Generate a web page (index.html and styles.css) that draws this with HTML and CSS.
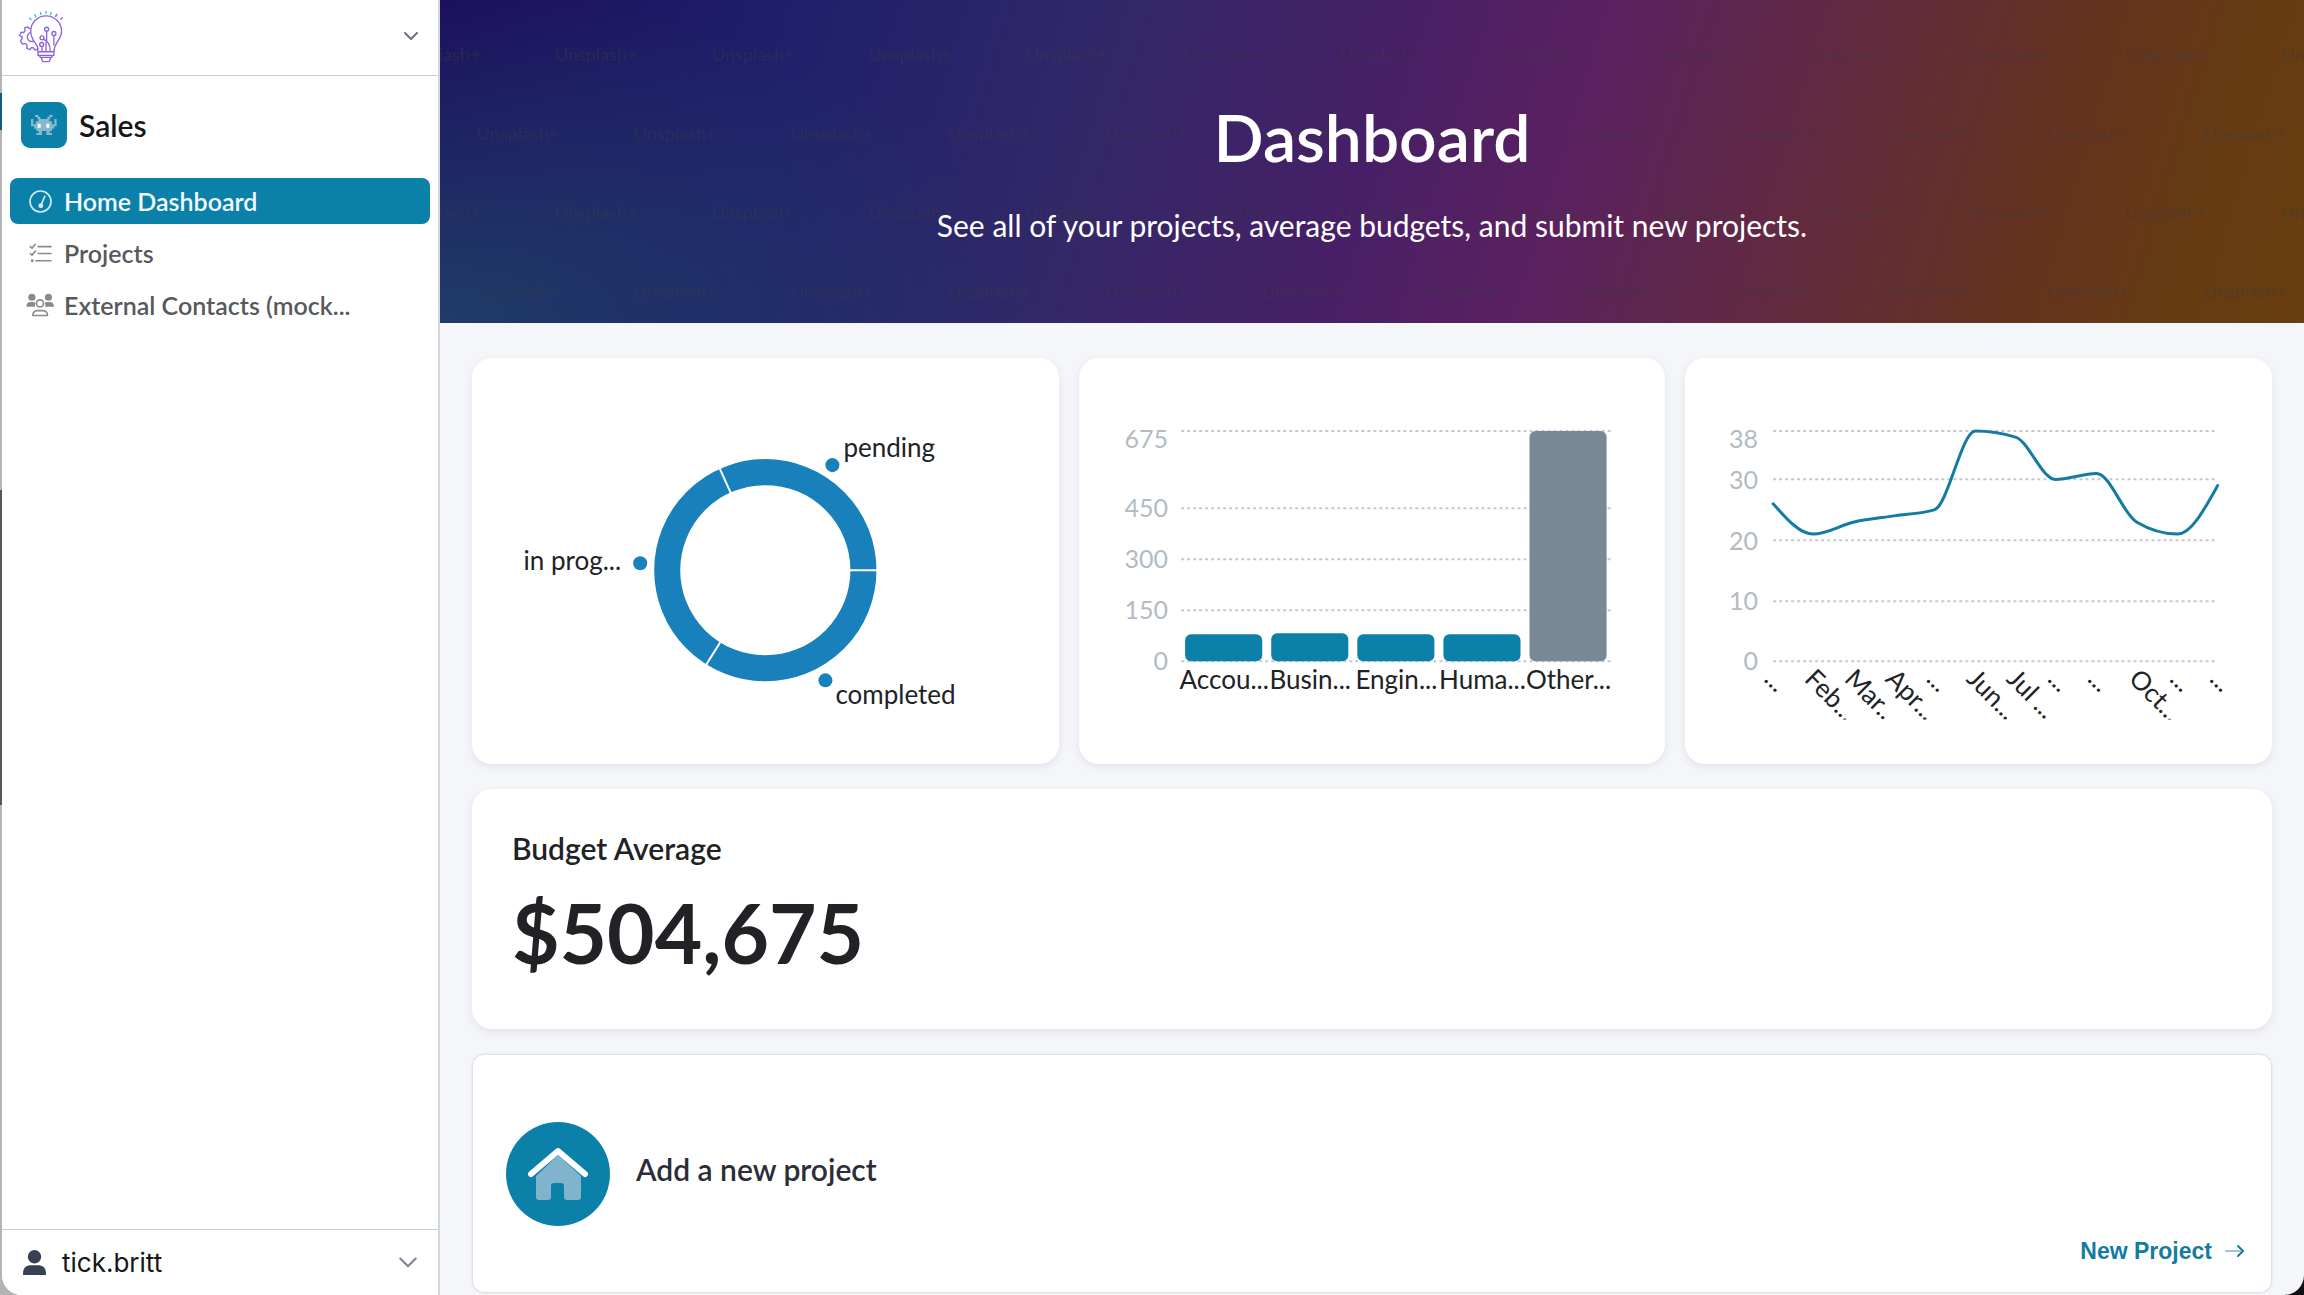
FILE: index.html
```html
<!DOCTYPE html>
<html lang="en">
<head>
<meta charset="utf-8">
<title>Sales – Dashboard</title>
<link rel="stylesheet" href="styles.css">
</head>
<body>
<div class="app">
  <aside class="sidebar">
    <button class="workspace" aria-label="Switch workspace">
      <svg class="logo" viewBox="54 28 138 160" fill="none" stroke="#8a63d8" stroke-width="4" stroke-linecap="round" stroke-linejoin="round">
        <g stroke="#35b8cf"><path d="M89 52l4 5M104 42l3 6M121 36l2 6M138 32v6M154 36l-2 6"/></g>
        <path d="M171 41l-4 6M187 51l-4 5"/>
        <path d="M113 153v-13c-3-10-21-22-21-48a46 46 0 0 1 93 0c0 26-21 32-23 61"/>
        <circle cx="140" cy="86" r="6"/><circle cx="162" cy="99" r="6"/><circle cx="126" cy="112" r="6"/><circle cx="125" cy="132" r="6"/>
        <path d="M140 93v28M162 106v28M131 116c12 8 20 14 20 36M126 139v14M138 126v26"/>
        <path d="M114 154h48v11h-48zM118 166l3 5h34l3-5M124 172l3 9q1 3 4 3h14q3 0 4-3l3-9"/>
        <path d="M91 84l-5-1-3-4-9 2 1 9-4 6-8-1-5 10 8 4v6l-5 6 6 10 9-2 5 5-1 9 9 5 5-6h6l5 7 9-4M90 96c-7 4-9 10-8 16 2 8 9 12 17 11"/>
      </svg>
      <svg class="chevron" viewBox="0 0 14 9" fill="none" stroke="#6b7280" stroke-width="2" stroke-linecap="round" stroke-linejoin="round"><path d="M1 1l6 6 6-6"/></svg>
    </button>

    <div class="space">
      <span class="space-icon">
        <svg viewBox="93 340 78 62" fill="#86b9d0">
          <path d="M93 352h7v16h7v-9h8v-7h-3v-6h-7v-6h10v5h6v7h21v-7h6v-5h10v6h-7v6h-3v7h8v9h7v-16h7v22h-7v7h-7v7h-7v6h7v6h-17v-12h-13v12h-17v-6h7v-6h-7v-7h-7v-7h-9z"/>
          <path fill="#fff" d="M113 366h9v12h-9zM139 366h9v12h-9z"/>
        </svg>
      </span>
      <h2 class="space-name">Sales</h2>
    </div>

    <nav class="nav">
      <a class="nav-item nav-item-active" href="#home">
        <svg class="icon-gauge" viewBox="84 573 70 70" fill="none" stroke="#cdeaf6" stroke-width="5" stroke-linecap="round"><circle cx="119" cy="608" r="32"/><path d="M121 618l11-26"/><circle cx="120" cy="621" r="5" fill="#cdeaf6"/></svg>
        <span>Home Dashboard</span>
      </a>
      <a class="nav-item" href="#projects">
        <svg class="icon-list" viewBox="84 730 70 60" fill="none" stroke="#8a8a8e" stroke-width="5" stroke-linecap="round" stroke-linejoin="round"><path d="M88 741l5 5 10-12M88 762l5 5 10-12M112 741h39M112 762h39M105 784h46"/><circle cx="94" cy="784" r="2"/></svg>
        <span>Projects</span>
      </a>
      <a class="nav-item" href="#contacts">
        <svg class="icon-users" viewBox="77 886 86 72" fill="#8a8a8e"><circle cx="95" cy="899" r="11"/><circle cx="146" cy="899" r="11"/><path d="M78 928c0-8 5-14 12-14h10q4 0 6 2-3 6-1 12zM163 928c0-8-5-14-12-14h-10q-4 0-6 2 3 6 1 12z"/><g fill="none" stroke="#8a8a8e" stroke-width="5" stroke-linejoin="round"><circle cx="120" cy="918" r="11"/><path d="M98 955c0-9 6-15 14-15h17c8 0 14 6 14 15z"/></g></svg>
        <span>External Contacts (mock...</span>
      </a>
    </nav>

    <button class="account">
      <svg class="icon-user" viewBox="0 0 24 27" fill="#384152"><circle cx="12" cy="7" r="7"/><path d="M0 25c0-6 3-9 8-9h8c5 0 8 3 8 9q0 2-2 2H2q-2 0-2-2z"/></svg>
      <span>tick.britt</span>
      <svg class="chevron chevron-large" viewBox="0 0 14 9" fill="none" stroke="#7d8591" stroke-width="1.6" stroke-linecap="round" stroke-linejoin="round"><path d="M1 1l6 6 6-6"/></svg>
    </button>
  </aside>

  <main class="main">
    <header class="hero">
      <svg class="watermark" aria-hidden="true">
        <defs>
          <pattern id="marks" width="157" height="158" patternUnits="userSpaceOnUse">
            <text x="-42" y="61">Unsplash+</text>
            <text x="115" y="61">Unsplash+</text>
            <text x="37" y="140">Unsplash+</text>
          </pattern>
        </defs>
        <rect width="100%" height="100%" fill="url(#marks)"/>
      </svg>
      <h1 class="hero-title">Dashboard</h1>
      <p class="hero-text">See all of your projects, average budgets, and submit new projects.</p>
    </header>

    <div class="content">
      <section class="charts">
        <article class="card">
          <svg class="chart" viewBox="0 0 586 406" role="img" aria-label="Projects by status">
            <circle cx="293" cy="212" r="98" fill="none" stroke="#1880ba" stroke-width="26"/>
            <g stroke="#fff" stroke-width="2"><path d="M376 212h36M248 284l-17 27M259 136l-14-31"/></g>
            <g fill="#1880ba"><circle cx="360" cy="107" r="7"/><circle cx="353" cy="322" r="7"/><circle cx="168" cy="205" r="7"/></g>
            <g class="label">
              <text x="371" y="99">pending</text>
              <text x="363" y="346">completed</text>
              <text x="149" y="212" text-anchor="end">in prog...</text>
            </g>
          </svg>
        </article>
        <article class="card">
          <svg class="chart" viewBox="0 0 586 406" role="img" aria-label="Projects by department">
            <path class="grid" d="M102 73h430M102 150h430M102 201h430M102 252h430M102 303h430"/>
            <g class="tick" text-anchor="end">
              <text x="89" y="90">675</text><text x="89" y="159">450</text><text x="89" y="210">300</text><text x="89" y="261">150</text><text x="89" y="312">0</text>
            </g>
            <g fill="#0b80a9">
              <rect x="106" y="276" width="77" height="27" rx="6"/><rect x="192" y="275" width="77" height="28" rx="6"/><rect x="278" y="276" width="77" height="27" rx="6"/><rect x="364" y="276" width="77" height="27" rx="6"/>
              <rect x="450" y="73" width="77" height="230" rx="6" fill="#788896"/>
            </g>
            <g class="label" text-anchor="middle">
              <text x="145" y="331">Accou...</text><text x="231" y="331">Busin...</text><text x="317" y="331">Engin...</text><text x="403" y="331">Huma...</text><text x="489" y="331">Other...</text>
            </g>
          </svg>
        </article>
        <article class="card">
          <svg class="chart" viewBox="0 0 586 406" role="img" aria-label="Projects by month">
            <defs><clipPath id="axis"><rect width="586" height="361"/></clipPath></defs>
            <path class="grid" d="M88 73h444M88 121h444M88 182h444M88 243h444M88 303h444"/>
            <g class="tick" text-anchor="end">
              <text x="73" y="90">38</text><text x="73" y="131">30</text><text x="73" y="192">20</text><text x="73" y="252">10</text><text x="73" y="312">0</text>
            </g>
            <path fill="none" stroke="#147ba1" stroke-width="3" stroke-linecap="round" d="M88 145.6C101.5 160.7 114.5 175.9 128 175.9S155.5 166.8 169 163.8S195.5 159.7 209 157.7S235.5 155.7 249 151.7S276.5 73 290 73S316.5 75 330 79S356.5 121.4 370 121.4S397.5 115.4 411 115.4S437.5 155.7 451 163.8S478.5 175.9 492 175.9S518.5 151.7 532 127.5"/>
            <g class="label" clip-path="url(#axis)">
              <text transform="translate(78 322) rotate(45)">...</text>
              <text transform="translate(118 322) rotate(45)">Feb...</text>
              <text transform="translate(158 322) rotate(45)">Mar...</text>
              <text transform="translate(199 322) rotate(45)">Apr...</text>
              <text transform="translate(240 322) rotate(45)">...</text>
              <text transform="translate(280 322) rotate(45)">Jun...</text>
              <text transform="translate(320 322) rotate(45)">Jul ...</text>
              <text transform="translate(361 322) rotate(45)">...</text>
              <text transform="translate(401 322) rotate(45)">...</text>
              <text transform="translate(442 322) rotate(45)">Oct...</text>
              <text transform="translate(483 322) rotate(45)">...</text>
              <text transform="translate(523 322) rotate(45)">...</text>
            </g>
          </svg>
        </article>
      </section>

      <section class="card budget">
        <h2 class="budget-title">Budget Average</h2>
        <p class="budget-value">$504,675</p>
      </section>

      <section class="card project">
        <div class="project-head">
          <svg class="project-icon" viewBox="0 0 104 104"><circle cx="52" cy="52" r="52" fill="#0b80a9"/><path fill="#80b4cc" d="M52 33l23 21v21q0 3-3 3H61q-3 0-3-3V64q0-3-3-3h-7q-3 0-3 3v11q0 3-3 3H33q-3 0-3-3V54z"/><path fill="none" stroke="#fff" stroke-width="6" stroke-linecap="round" stroke-linejoin="round" d="M25 52l27-23 27 23"/></svg>
          <h2 class="project-title">Add a new project</h2>
        </div>
        <a class="project-link" href="#new-project">New Project
          <svg viewBox="0 0 20 14" fill="none" stroke-width="2" stroke-linecap="round" stroke-linejoin="round"><path stroke="#9cc5d6" d="M1 7h14"/><path stroke="#147ba1" d="M13 2l5 5-5 5"/></svg>
        </a>
      </section>
    </div>
  </main>
</div>
</body>
</html>
```
FILE: styles.css
```css
* {
  box-sizing: border-box;
}

body,
h1,
h2,
p {
  margin: 0;
}

body {
  font-family: Lato, "Open Sans", sans-serif;
  color: #212225;
  background:
    linear-gradient(#0f5f7c, #0f5f7c) 0 93px / 2px 37px no-repeat,
    linear-gradient(#55555c, #55555c) 0 490px / 2px 315px no-repeat,
    linear-gradient(90deg, #b4b4b6 50%, #120f18 50%);
}

button {
  font: inherit;
  color: inherit;
  background: none;
  border: 0;
  text-align: left;
}

a {
  text-decoration: none;
}

svg {
  display: block;
  flex: none;
}

.app {
  display: grid;
  grid-template-columns: 438px minmax(0, 1fr);
  min-height: 100vh;
  margin-left: 2px;
  overflow: hidden;
  background: #f5f6fa;
  border-radius: 0 0 20px 20px;
}

/* Sidebar */

.sidebar {
  display: flex;
  flex-direction: column;
  background: #fff;
  border-right: 2px solid #d2d6e0;
}

.workspace,
.account {
  display: flex;
  align-items: center;
  width: 100%;
}

.workspace {
  justify-content: space-between;
  height: 76px;
  padding: 0 20px 3px 16px;
  border-bottom: 1px solid #c8ccd6;
}

.logo {
  width: 46px;
  height: 53px;
}

.chevron {
  width: 14px;
  height: 9px;
}

.chevron-large {
  width: 18px;
  height: 12px;
  margin-left: auto;
}

.space {
  display: flex;
  align-items: center;
  gap: 12px;
  padding: 26px 19px 30px;
}

.space-icon {
  display: grid;
  place-items: center;
  width: 46px;
  height: 46px;
  background: #0b80a9;
  border-radius: 9px;
}

.space-icon svg {
  width: 26px;
}

.space-name {
  font-size: 30px;
  font-weight: 600;
  line-height: 34px;
  color: #15161a;
}

.nav {
  display: flex;
  flex-direction: column;
  gap: 6px;
  padding: 0 8px;
}

.nav-item {
  display: grid;
  grid-template-columns: 28px 1fr;
  align-items: center;
  gap: 10px;
  height: 46px;
  padding: 0 16px;
  font-size: 25px;
  font-weight: 600;
  color: #58595e;
  border-radius: 8px;
}

.nav-item-active {
  color: #f2fbff;
  background: #0b80a9;
}

.nav-item svg {
  justify-self: center;
}

.icon-gauge,
.icon-list {
  width: 23px;
}

.icon-users {
  width: 28px;
}

.account {
  gap: 16px;
  height: 66px;
  margin-top: auto;
  padding: 0 21px;
  font-family: Inter, sans-serif;
  font-size: 26px;
  color: #15161a;
  border-top: 1px solid #c8ccd6;
}

.icon-user {
  width: 23px;
}

/* Banner */

.hero {
  position: relative;
  display: flex;
  flex-direction: column;
  align-items: center;
  gap: 26px;
  height: 323px;
  padding-top: 98px;
  color: #fff;
  text-align: center;
  background:
    radial-gradient(ellipse 600px 330px at 0 100%, #1f3c68, #1f3c6800),
    linear-gradient(107deg, #1c0f5c 0%, #20206a 19%, #322868 35%, #481f66 50%, #5b2160 60%, #632b3c 74%, #653220 84%, #663b12 93%, #683e0f 100%);
}

.watermark {
  position: absolute;
  inset: 0;
  width: 100%;
  height: 100%;
  font-size: 18px;
  fill: #3a3a44;
  opacity: 0.4;
}

.hero-title,
.hero-text {
  position: relative;
}

.hero-title {
  font-size: 66px;
  font-weight: 600;
  line-height: 77px;
}

.hero-text {
  font-size: 30px;
  line-height: 48px;
}

/* Cards */

.content {
  display: grid;
  gap: 25px;
  padding: 35px 32px 0;
}

.charts {
  display: grid;
  grid-template-columns: repeat(3, minmax(0, 1fr));
  gap: 20px;
}

.card {
  background: #fff;
  border-radius: 20px;
  box-shadow: 0 3px 8px rgba(30, 40, 70, 0.09);
}

.chart {
  width: 100%;
}

.grid {
  stroke: #c6c8cb;
  stroke-width: 2;
  stroke-dasharray: 3 3;
}

.label {
  font-size: 26px;
  fill: #212225;
}

.tick {
  font-size: 25px;
  fill: #b3bbc2;
}

.budget {
  padding: 42px 40px 50px;
}

.budget-title,
.project-title {
  font-size: 30px;
  font-weight: 600;
  line-height: 34px;
}

.budget-value {
  margin-top: 20px;
  font-size: 82px;
  font-weight: 700;
  line-height: 94px;
}

.project {
  display: flex;
  flex-direction: column;
  padding: 67px 26px 28px 33px;
  border: 1px solid #e0e1e8;
  border-radius: 12px;
  box-shadow: 0 0 3px rgba(30, 40, 70, 0.1);
}

.project-head {
  display: flex;
  align-items: center;
  gap: 26px;
}

.project-icon {
  width: 104px;
}

.project-title {
  padding-bottom: 10px;
  color: #2b2d38;
}

.project-link {
  display: flex;
  align-items: center;
  align-self: flex-end;
  gap: 13px;
  margin-top: 12px;
  font-family: "Liberation Sans", Arial, sans-serif;
  font-size: 23px;
  font-weight: 700;
  line-height: 26px;
  color: #147ba1;
}

.project-link svg {
  width: 20px;
}
```
